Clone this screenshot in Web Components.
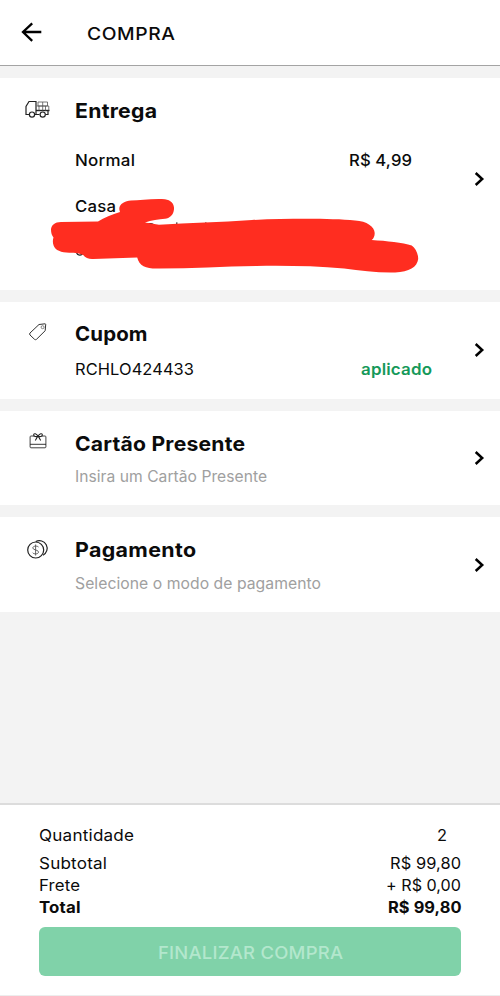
<!DOCTYPE html>
<html lang="pt-BR">
<head>
<meta charset="utf-8">
<title>Compra</title>
<style>
body{margin:0;background:#f3f3f3;color:#0b0b0b;font-family:Inter,"Open Sans",sans-serif}
</style>
</head>
<body>
<checkout-page></checkout-page>
<script>
const define = (name, html, setup) => {
  const tpl = document.createElement('template');
  tpl.innerHTML = html;
  customElements.define(name, class extends HTMLElement {
    constructor() {
      super();
      this.attachShadow({mode: 'open'}).append(tpl.content.cloneNode(true));
    }
    connectedCallback() { if (setup) setup.call(this); }
  });
};

// A single line of text; "w" is its width, reached by widening the glyphs and a little tracking.
define('text-line', `<style>
:host{display:block;white-space:pre;font-size:16px;line-height:20px;font-weight:400;flex:none}
:host([kind=title]){font-size:20px;line-height:24px;font-weight:700}
:host([kind=medium]){font-weight:500}
:host([kind=ok]){font-weight:600;color:#16995a}
:host([kind=hint]){color:#a0a0a0;font-size:15.5px}
:host([kind=bold]){font-weight:700}
:host([kind=bar]){font-size:17.5px;line-height:24px;font-weight:500}
:host([kind=button]){font-size:17.5px;line-height:24px;font-weight:500;color:#b3e7cd}
span{display:inline-block;transform-origin:0 50%}
</style><span><slot></slot></span>`, function () {
  const span = this.shadowRoot.querySelector('span');
  const n = this.textContent.length;
  const target = Number(this.getAttribute('w'));
  const natural = span.getBoundingClientRect().width;
  const gap = (target - natural) * 0.25 / Math.max(1, n - 1);
  span.style.letterSpacing = gap.toFixed(3) + 'px';
  span.style.marginRight = (-gap).toFixed(3) + 'px';
  span.style.transform = `scaleX(${(target / (natural + gap * (n - 1))).toFixed(4)})`;
  this.style.width = target + 'px';
});

const icons = {
  back: `<svg width="22" height="22" viewBox="0 0 22 22"><path d="M20.3 11H2M11.200 2.300L2 11l9.200 8.800" fill="none" stroke="#000" stroke-width="2.300"/></svg>`,
  chevron: `<svg width="12" height="16" viewBox="0 0 12 16"><path d="M1.700 2L8.200 8l-6.500 6" fill="none" stroke="#000" stroke-width="2.500"/></svg>`,
  truck: `<svg width="28" height="20" viewBox="0 0 28 20" fill="none" stroke="#222" stroke-width="1.200"><path d="M5 15.500H2V7.500L5 2.500h7v13M10.500 15.500h5M21.500 15.500h2.500v-4"/><path d="M12 11.500h13.500" stroke-width="1.400"/><path d="M14 3h9.500v4H14zM18.700 3v8.500M12.500 7h12.300v4.500M15 7v4.500M21.500 7v4.500" stroke="#555" stroke-width=".8"/><circle cx="8" cy="15.600" r="2.600"/><circle cx="18.700" cy="15.600" r="2.600"/></svg>`,
  tag: `<svg width="20" height="20" viewBox="0 0 20 20" fill="none" stroke="#333" stroke-width="1"><path d="M11 2.500l6-.7q.7 0 .7.700l-.5 6.200L8.500 17.300q-1 .8-2 0L2 13q-.8-1 0-2z"/><circle cx="14.600" cy="5.200" r="1.500" stroke="#666" stroke-width=".8"/></svg>`,
  gift: `<svg width="18" height="18" viewBox="0 0 18 18" fill="none" stroke="#222"><path d="M5.500 4H2q-.9 0-.9.900v10q0 .9.900.9h14q.9 0 .9-.9v-10q0-.9-.9-.9h-3.500" stroke="#444"/><path d="M1 12.300h16" stroke-width=".9"/><path d="M9 4.200C7.500 1.400 4.700 1 4.700 2.900 4.700 4.700 7.500 4.900 9 4.200c1.500.7 4.300.5 4.300-1.300C13.300 1 10.500 1.400 9 4.200zM8.600 4.500L6.300 8.500M9.400 4.500l2.300 4" stroke-width="1.100"/></svg>`,
  coins: `<svg width="24" height="22" viewBox="0 0 24 22" fill="none" stroke="#222" stroke-width="1.200"><circle cx="9.700" cy="12" r="8"/><path d="M9.800 3.500A7.600 7.600 0 1 1 17 17.200"/><path d="M12.500 9C11.800 7.900 6.800 7.500 6.800 10c0 2.300 5.700 1.600 5.700 4 0 2.500-5 2.300-5.900.7M9.600 6.500v11" stroke="#555" stroke-width=".9"/></svg>`
};
define('ui-icon', `<style>:host{display:block;flex:none}svg{display:block}</style><div></div>`, function () {
  this.shadowRoot.querySelector('div').innerHTML = icons[this.getAttribute('name')];
});

define('app-bar', `<style>
:host{display:flex;box-sizing:border-box;height:66px;padding:0 22px;background:#fff;border-bottom:1px solid #a4a4a4}
ui-icon{margin:21px 44px 0 -1px}
</style><ui-icon name="back"></ui-icon><slot></slot>`);

define('option-card', `<style>
:host{display:grid;grid-template-columns:75px 1fr 26px;box-sizing:border-box;background:#fff}
.icon{display:flex;justify-content:center;align-items:flex-start}
.body{min-width:0}
.arrow{display:flex;align-items:flex-start;padding-top:var(--arrow)}
</style><div class="icon"><slot name="icon"></slot></div><div class="body"><slot></slot></div><div class="arrow"><ui-icon name="chevron"></ui-icon></div>`);

define('split-row', `<style>:host{display:flex;justify-content:space-between}</style><slot></slot>`);

// Red marker strokes covering the address.
define('marker-cover', `<style>:host{display:block;pointer-events:none}svg{display:block}</style>
<svg width="376" height="84" viewBox="48 194 376 84">
<path d="M146.500 224.600q4-1.800 7 0M176 223.200h1.500M205 223h1.500M76.500 252.500q1 2.800 3.500 2.600 2.500-.2 3-2.500" fill="none" stroke="#222" stroke-width="1.200"/>
<path fill="#ff2d20" d="M51 230c0-5 4-8 10-8l37-.5c6-4 14-7 22-9.500-3-7 4-11 11-11.500 9 0 21-2 34-1.200 6 .7 9.500 5 9 10-.5 6-4.500 9-9 9.500-6 .6-14 1.500-20 3.700l14 2.200c30-2 61-2.200 93-4.700 37-1.500 79-1.700 103 .5 12 .5 19.500 6.500 19.700 12.500 0 3-1 5.500-3 7 15 1 31 2.500 40 5.500 4 3 6.500 8 6.500 13.500-1 8-9 13-23 13.500-17 .5-34-2-51-4-29-2.500-59-3-88-2.500-33 .5-64 2.500-97 2.500-12 .5-20-2-22-11l-44 1.500c-4 .3-8-1-10-4-4-2-7-2-14-2.300-8-.2-14-2.500-15.500-7-1.200-3-1-6-.2-8.200-1.700-2-2.500-5-2.500-8z"/>
</svg>`);

define('order-summary', `<style>
:host{display:block;box-sizing:border-box;height:193px;background:#fff;border-top:2px solid #dcdcdc;border-bottom:1px solid #ededed;padding:20px 39px 0}
.first{margin-bottom:8px;padding-right:14px}
split-row+split-row{height:22px}
.btn{display:flex;justify-content:center;align-items:center;box-sizing:border-box;height:49px;margin-top:8px;padding-top:3px;border-radius:6px;background:#80d2a9}
</style>
<split-row class="first"><text-line w="95">Quantidade</text-line><text-line w="10">2</text-line></split-row>
<split-row><text-line w="68">Subtotal</text-line><text-line w="71">R$ 99,80</text-line></split-row>
<split-row><text-line w="41">Frete</text-line><text-line w="75">+ R$ 0,00</text-line></split-row>
<split-row><text-line kind="bold" w="41.500">Total</text-line><text-line kind="bold" w="73.500">R$ 99,80</text-line></split-row>
<div class="btn"><text-line kind="button" w="185">FINALIZAR COMPRA</text-line></div>`);

define('checkout-page', `<style>
:host{display:flex;flex-direction:column;height:996px;width:500px}
main{flex:1;display:flex;flex-direction:column;gap:12px;padding-top:12px}
[kind=bar]{margin-top:22px}
.ship{height:212px;padding-top:21px;--arrow:72px;position:relative}
.coupon{height:97px;padding-top:20px;--arrow:20px}
.gift{height:94px;padding-top:21px;--arrow:18px}
.pay{height:95px;padding-top:21px;--arrow:19px}
marker-cover{position:absolute;left:48px;top:116px}
</style>
<app-bar><text-line kind="bar" w="88">COMPRA</text-line></app-bar>
<main>
<option-card class="ship"><ui-icon slot="icon" name="truck"></ui-icon>
<text-line kind="title" w="82">Entrega</text-line>
<split-row style="margin-top:27px;padding-right:62px"><text-line kind="medium" w="60">Normal</text-line><text-line kind="medium" w="63">R$ 4,99</text-line></split-row>
<text-line kind="medium" w="41" style="margin-top:26px">Casa</text-line>
<marker-cover></marker-cover></option-card>
<option-card class="coupon"><ui-icon slot="icon" name="tag"></ui-icon>
<text-line kind="title" w="72.500">Cupom</text-line>
<split-row style="margin-top:13px;padding-right:42px"><text-line w="119">RCHLO424433</text-line><text-line kind="ok" w="71">aplicado</text-line></split-row></option-card>
<option-card class="gift"><ui-icon slot="icon" name="gift"></ui-icon>
<text-line kind="title" w="170">Cartão Presente</text-line>
<text-line kind="hint" w="192" style="margin-top:11px">Insira um Cartão Presente</text-line></option-card>
<option-card class="pay"><ui-icon slot="icon" name="coins"></ui-icon>
<text-line kind="title" w="121">Pagamento</text-line>
<text-line kind="hint" w="246" style="margin-top:12px">Selecione o modo de pagamento</text-line></option-card>
</main>
<order-summary></order-summary>`);
</script>
</body>
</html>
